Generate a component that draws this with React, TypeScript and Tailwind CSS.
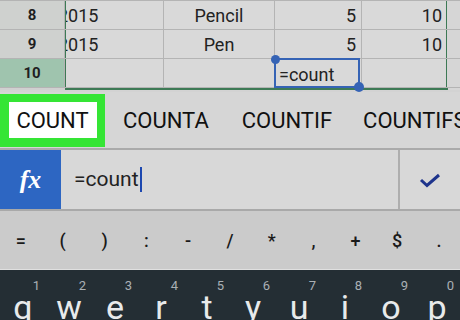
import React from "react";

const font = { fontFamily: "Roboto, 'Liberation Sans', sans-serif" };

function Row({ num, a, b, c, d, active, formula }: { num: string; a?: string; b?: string; c?: string; d?: string; active?: boolean; formula?: boolean }) {
  return (
    <div className="flex h-[29px] border-b border-[#b4b4b4]">
      <div className={`w-[65px] shrink-0 flex items-center justify-center text-[15px] font-bold text-[#1f1f1f] border-r border-[#b4b4b4] ${active ? "bg-[#9fc4ae]" : "bg-[#cfd1cf]"}`}>{num}</div>
      <div className="w-[1px] shrink-0 bg-[#3d7a55]" />
      <div className="w-[98px] shrink-0 overflow-hidden border-r border-[#b4b4b4] flex items-center bg-[#d9d9d9]">
        {a && <span className="text-[18px] text-[#222] ml-[-8px] whitespace-nowrap">{a}</span>}
      </div>
      <div className="w-[111px] shrink-0 border-r border-[#b4b4b4] flex items-center justify-center bg-[#d9d9d9] text-[18px] text-[#222]">{b}</div>
      <div className="w-[87px] shrink-0 border-r border-[#b4b4b4] flex items-center justify-end pr-[5px] bg-[#d9d9d9] text-[18px] text-[#222] relative">
        {c}
        {formula && (
          <div className="absolute left-[-1px] top-[-1px] w-[86px] h-[30px] border-2 border-[#3563b5] flex items-end pb-[2px] pl-[3px]">
            <span className="text-[18px] text-[#222] leading-none">=count</span>
            <div className="absolute left-[-5px] top-[-5px] w-[9px] h-[9px] rounded-full bg-[#3563b5]" />
            <div className="absolute right-[-6px] bottom-[-6px] w-[10px] h-[10px] rounded-full bg-[#3563b5]" />
          </div>
        )}
      </div>
      <div className="w-[84px] shrink-0 flex items-center justify-end pr-[4px] bg-[#d9d9d9] text-[18px] text-[#222]">{d}</div>
      <div className="w-[1px] shrink-0 bg-[#3d7a55]" />
      <div className="flex-1 bg-[#d6d6d6]" />
    </div>
  );
}

export default function App() {
  const symbols = ["=", "(", ")", ":", "-", "/", "*", ",", "+", "$", "."];
  const keys = ["q", "w", "e", "r", "t", "y", "u", "i", "o", "p"];
  const nums = ["1", "2", "3", "4", "5", "6", "7", "8", "9", "0"];
  return (
    <div className="w-[460px] h-[320px] overflow-hidden bg-[#d6d6d6] flex flex-col" style={font}>
      {/* sheet */}
      <div className="h-[92px] shrink-0 flex flex-col">
        <div className="h-[1px] bg-[#b4b4b4]" />
        <Row num="8" a="2015" b="Pencil" c="5" d="10" />
        <Row num="9" a="2015" b="Pen" c="5" d="10" />
        <Row num="10" active formula />
        <div className="flex h-[2px]">
          <div className="w-[65px] bg-[#d0d0d0]" />
          <div className="w-[383px] bg-[#3d7a55]" />
          <div className="flex-1" />
        </div>
        <div className="flex-1 bg-[#d3d3d3]" />
      </div>
      {/* suggestions */}
      <div className="h-[58px] shrink-0 flex items-center border-b-2 border-[#aaaaaa] bg-[#d6d6d6] whitespace-nowrap">
        <div className="h-[53px] w-[105px] shrink-0 bg-[#35e535] flex items-center justify-center">
          <div className="w-[88px] h-[36px] bg-white flex items-center justify-center text-[22px] text-[#111]">COUNT</div>
        </div>
        <div className="ml-[18px] text-[22px] text-[#111]">COUNTA</div>
        <div className="ml-[33px] text-[22px] text-[#111]">COUNTIF</div>
        <div className="ml-[31px] text-[22px] text-[#111]">COUNTIFS</div>
      </div>
      {/* formula bar */}
      <div className="h-[61px] shrink-0 flex border-b-2 border-[#a9a9a9]">
        <div className="w-[61px] shrink-0 bg-[#2d66c2] flex items-center justify-center">
          <span className="text-white italic font-bold text-[26px]" style={{ fontFamily: "'Liberation Serif', 'DejaVu Serif', serif" }}>fx</span>
        </div>
        <div className="flex-1 bg-[#d8d8d8] flex items-center pl-[13px]">
          <span className="text-[21px] text-[#222]">=count</span>
          <span className="w-[2px] h-[25px] bg-[#1d48b0] ml-[1px]" />
        </div>
        <div className="w-[2px] bg-[#aeaeae]" />
        <div className="w-[60px] shrink-0 bg-[#d8d8d8] flex items-center justify-center">
          <svg width="24" height="18" viewBox="0 0 24 18">
            <polyline points="3,9 9,14.5 21,4" fill="none" stroke="#1e348c" strokeWidth="3" />
          </svg>
        </div>
      </div>
      {/* symbol row */}
      <div className="h-[59px] shrink-0 bg-[#cbcbcb] flex items-center border-b border-[#e0e0e0]">
        {symbols.map((s, i) => (
          <div key={i} className="flex-1 flex justify-center text-[18px] text-[#1a1a1a] font-medium">{s}</div>
        ))}
      </div>
      {/* keyboard */}
      <div className="flex-1 bg-[#242e34] flex">
        {keys.map((k, i) => (
          <div key={k} className="flex-1 relative flex justify-center">
            <span className="absolute right-[6px] top-[9px] text-[13px] leading-none text-[#aab0b4]">{nums[i]}</span>
            <span className="text-[34px] text-[#e8eaeb] mt-[20px] leading-none">{k}</span>
          </div>
        ))}
      </div>
    </div>
  );
}
